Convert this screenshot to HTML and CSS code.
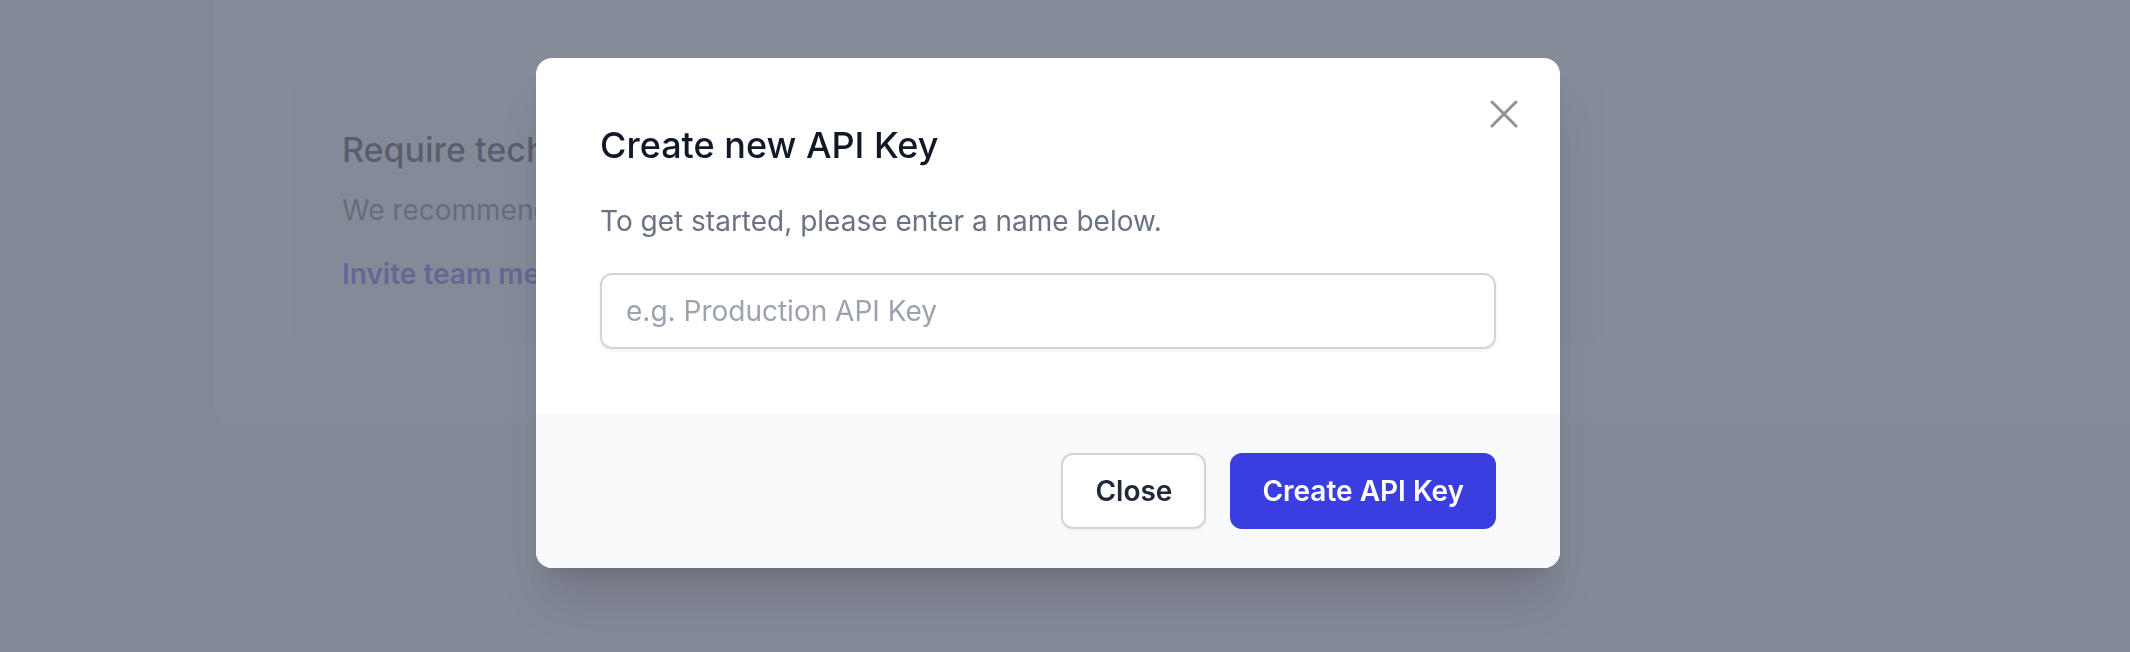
FILE: index.html
```html
<!DOCTYPE html>
<html lang="en">
<head>
  <meta charset="UTF-8" />
  <title>API Keys</title>
  <link rel="stylesheet" href="styles.css">
</head>
<body>

<div class="page">
  <div class="panel">
    <div class="help-card">
      <h3 class="help-title">Require technical help?</h3>
      <p class="help-text">We recommend inviting a developer from your team to set up the integration.</p>
      <a class="help-link" href="#">Invite team members</a>
    </div>
  </div>
</div>

<div class="overlay">
  <div class="modal">
    <button class="modal-close" type="button" aria-label="Close">
      <svg viewBox="0 0 24 24" fill="none" stroke="currentColor" stroke-width="1.5">
        <path stroke-linecap="round" stroke-linejoin="round" d="M6 18L18 6M6 6l12 12" />
      </svg>
    </button>
    <div class="modal-body">
      <h2 class="modal-title">Create new API Key</h2>
      <p class="modal-text">To get started, please enter a name below.</p>
      <input class="modal-input" type="text" placeholder="e.g. Production API Key" />
    </div>
    <div class="modal-footer">
      <button class="btn btn-secondary" type="button">Close</button>
      <button class="btn btn-primary" type="button">Create API Key</button>
    </div>
  </div>
</div>

</body>
</html>
```

FILE: styles.css
```css
html, body { margin: 0; overflow: hidden; }
body { font-family: Inter, "Noto Sans", sans-serif; background: #f3f4f6; height: 652px; }

.page { padding-left: 214px; }
.panel { width: 2000px; margin-top: -40px; padding: 118px 0 80px 78px; background: #fff; border-radius: 16px; box-shadow: 0 2px 4px rgba(0,0,0,0.05); box-sizing: border-box; }
.help-card { width: 1312px; padding: 45px 50px 48px; box-sizing: border-box; background: #f9fafb; border-radius: 16px; box-shadow: 0 2px 6px rgba(0,0,0,0.06); }
.help-title { margin: 0; font-size: 34px; line-height: 54px; font-weight: 500; color: #030712; white-space: nowrap; }
.help-text { margin: 13px 0 0; font-size: 28px; line-height: 40px; color: #4b5563; white-space: nowrap; }
.help-link { display: block; margin-top: 24px; font-size: 28px; line-height: 40px; font-weight: 600; color: #3a3ee0; text-decoration: none; white-space: nowrap; }

.overlay { position: fixed; inset: 0; background: rgba(107, 114, 130, 0.82); padding: 58px 0 0 536px; }
.modal { position: relative; width: 1024px; background: #fff; border-radius: 16px; overflow: hidden; box-shadow: 0 40px 50px -10px rgba(0,0,0,0.12), 0 16px 20px -12px rgba(0,0,0,0.12); }
.modal-close { position: absolute; top: 32px; right: 32px; width: 48px; height: 48px; padding: 0; border: 0; background: none; color: #8e9299; }
.modal-close svg { width: 48px; height: 48px; display: block; }
.modal-body { padding: 59px 64px 64px; }
.modal-title { margin: 0; font-size: 36px; line-height: 56px; font-weight: 500; color: #111827; }
.modal-text { margin: 28px 0 0; font-size: 28px; line-height: 40px; color: #6b7280; }
.modal-input { display: block; width: 100%; height: 76px; margin-top: 32px; padding: 0 24px; box-sizing: border-box; border: 2px solid #d1d5db; border-radius: 12px; font-family: inherit; font-size: 28px; color: #111827; box-shadow: 0 2px 4px rgba(0,0,0,0.05); outline: none; }
.modal-input::placeholder { color: #9ca3af; }

.modal-footer { display: flex; justify-content: flex-end; gap: 24px; padding: 40px 64px 39px; background: #f9fafb; }
.btn { height: 76px; padding: 0 32px; border-radius: 12px; font-family: inherit; font-size: 28px; font-weight: 600; }
.btn-secondary { background: #fff; color: #1f2937; border: 2px solid #d1d5db; box-shadow: 0 2px 4px rgba(0,0,0,0.05); }
.btn-primary { background: #3a3ee0; color: #fff; border: 0; }
```
